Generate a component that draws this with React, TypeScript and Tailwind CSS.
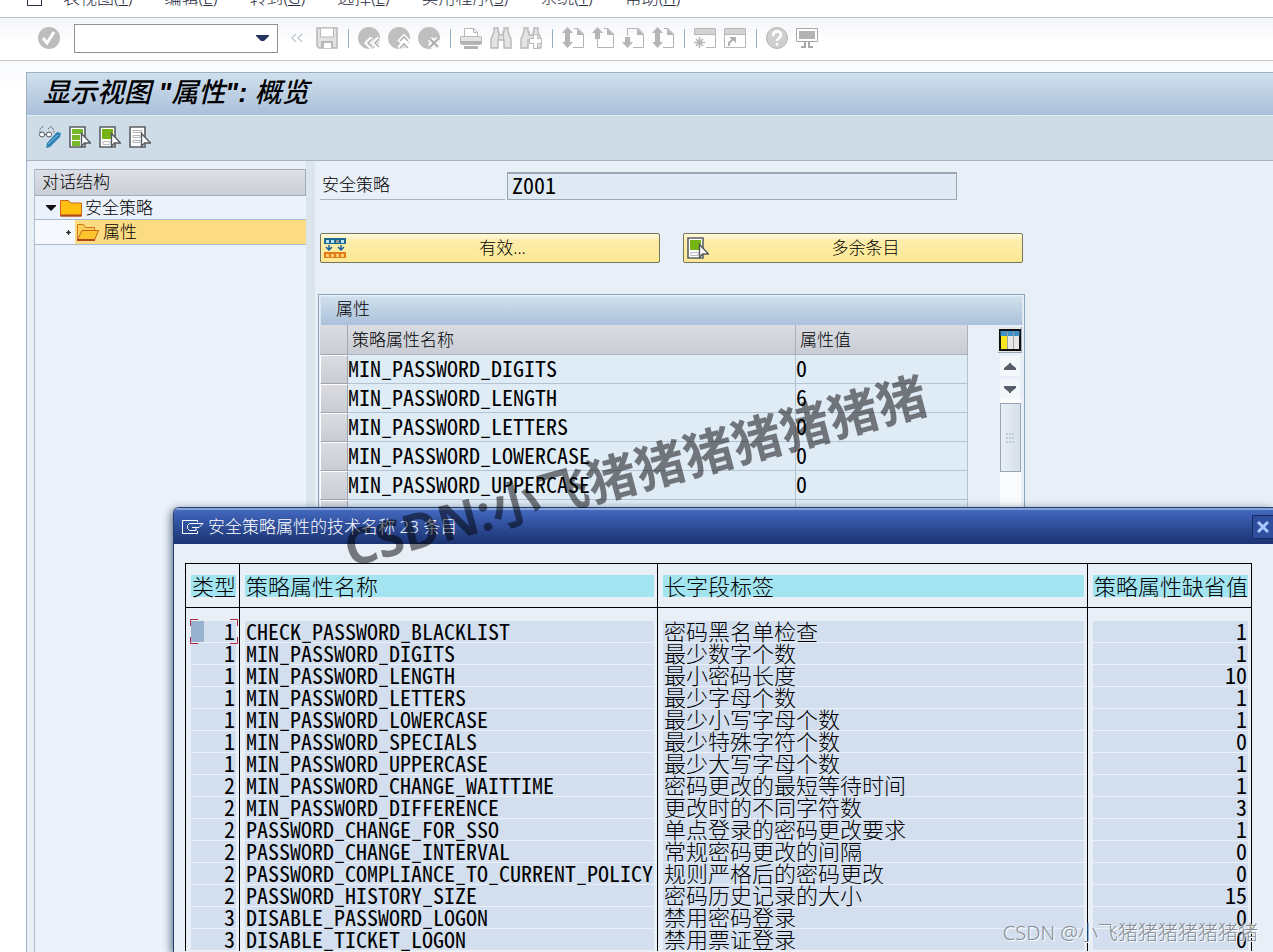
import type { ReactNode } from "react";

type IconProps = { children: ReactNode; label?: string };

const Glyph = ({ children }: IconProps) => (
  <svg width="22" height="22" viewBox="0 0 22 22" fill="none" aria-hidden="true">
    {children}
  </svg>
);

const ToolButton = ({ children, label }: IconProps) => (
  <button
    type="button"
    aria-label={label}
    className="flex h-7 w-[30px] shrink-0 items-center justify-center"
  >
    <Glyph>{children}</Glyph>
  </button>
);

const Separator = () => (
  <span className="flex w-3 shrink-0 justify-center">
    <span className="h-[19px] w-px bg-[#8fb0c6]" />
  </span>
);

const menus = [
  { text: "表视图", hotkey: "T" },
  { text: "编辑", hotkey: "E" },
  { text: "转到", hotkey: "G" },
  { text: "选择", hotkey: "L" },
  { text: "实用程序", hotkey: "S" },
  { text: "系统", hotkey: "Y" },
  { text: "帮助", hotkey: "H" },
];

const attributes = [
  { name: "MIN_PASSWORD_DIGITS", value: "0" },
  { name: "MIN_PASSWORD_LENGTH", value: "6" },
  { name: "MIN_PASSWORD_LETTERS", value: "0" },
  { name: "MIN_PASSWORD_LOWERCASE", value: "0" },
  { name: "MIN_PASSWORD_UPPERCASE", value: "0" },
  { name: "", value: "" },
];

const entries = [
  { type: 1, name: "CHECK_PASSWORD_BLACKLIST", label: "密码黑名单检查", value: 1 },
  { type: 1, name: "MIN_PASSWORD_DIGITS", label: "最少数字个数", value: 1 },
  { type: 1, name: "MIN_PASSWORD_LENGTH", label: "最小密码长度", value: 10 },
  { type: 1, name: "MIN_PASSWORD_LETTERS", label: "最少字母个数", value: 1 },
  { type: 1, name: "MIN_PASSWORD_LOWERCASE", label: "最少小写字母个数", value: 1 },
  { type: 1, name: "MIN_PASSWORD_SPECIALS", label: "最少特殊字符个数", value: 0 },
  { type: 1, name: "MIN_PASSWORD_UPPERCASE", label: "最少大写字母个数", value: 1 },
  { type: 2, name: "MIN_PASSWORD_CHANGE_WAITTIME", label: "密码更改的最短等待时间", value: 1 },
  { type: 2, name: "MIN_PASSWORD_DIFFERENCE", label: "更改时的不同字符数", value: 3 },
  { type: 2, name: "PASSWORD_CHANGE_FOR_SSO", label: "单点登录的密码更改要求", value: 1 },
  { type: 2, name: "PASSWORD_CHANGE_INTERVAL", label: "常规密码更改的间隔", value: 0 },
  { type: 2, name: "PASSWORD_COMPLIANCE_TO_CURRENT_POLICY", label: "规则严格后的密码更改", value: 0 },
  { type: 2, name: "PASSWORD_HISTORY_SIZE", label: "密码历史记录的大小", value: 15 },
  { type: 3, name: "DISABLE_PASSWORD_LOGON", label: "禁用密码登录", value: 0 },
  { type: 3, name: "DISABLE_TICKET_LOGON", label: "禁用票证登录", value: 0 },
];

const MenuBar = () => (
  <nav className="h-[18px] overflow-hidden border-b border-[#bcc4cc] bg-white">
    <div className="-mt-[14px] flex h-6 items-center gap-8 pl-[27px] leading-6 text-[#1f2a3c]">
      <span className="-mr-[11px] h-4 w-[15px] border border-[#2b3340]" />
      {menus.map((menu) => (
        <button key={menu.text} type="button" className="whitespace-nowrap">
          {menu.text}(<u>{menu.hotkey}</u>)
        </button>
      ))}
    </div>
  </nav>
);

const arrowUp = "M5.500 0 11 6H8v6H3V6H0z";
const arrowDown = "M5.500 21 11 15H8v-5H3v5H0z";

const PageIcon = ({ up, down }: { up?: boolean; down?: boolean }) => (
  <>
    <path d={up ? "M12 1.500h4l5.500 5.500v13.500" : "M5.500 9V1.500h11l5 5.500v13.500"} stroke="#b5b5b5" />
    <path d={down ? "M21.500 20.500H11" : "M21.500 20.500h-16V12"} stroke="#b5b5b5" />
    <path d="M15 1v7h7z" fill="#b5b5b5" />
    {up && <path d={arrowUp} fill="#b5b5b5" />}
    {down && <path d={arrowDown} fill="#b5b5b5" />}
  </>
);

const binoculars = "M4 1h4v4h1v3h4V5h1V1h4v4l3 7v9h-7v-8H8v8H1v-9l3-7z";

const StandardToolbar = () => (
  <header className="flex h-[43px] items-center overflow-hidden border-b border-[#c3c7cc] bg-linear-to-b from-[#f3f5f9] to-white to-60% pb-[2px] pl-[34px]">
    <ToolButton label="回车">
      <circle cx="11" cy="11" r="11" fill="#bdbdbd" />
      <path d="m5 11 4 5 7-11" stroke="#fff" strokeWidth="3" />
    </ToolButton>
    <div className="mr-1 ml-[10px] flex h-[29px] w-[204px] shrink-0 border border-[#8f9499] bg-white">
      <input aria-label="命令" className="w-0 flex-1 px-1 outline-none" />
      <button
        type="button"
        aria-label="历史"
        className="flex w-[30px] items-center justify-center"
      >
        <svg width="13" height="6" viewBox="0 0 13 6" aria-hidden="true">
          <path d="M0 0h13v1L8 6H5L0 1z" fill="#26345f" />
        </svg>
      </button>
    </div>
    <ToolButton label="隐藏">
      <path d="m10 7-4 4 4 4m6-8-4 4 4 4" stroke="#c8ccd2" strokeWidth="1.500" />
    </ToolButton>
    <ToolButton label="保存">
      <path d="M1 1h20v20H3l-2-2z" fill="#e2e2e2" stroke="#b8b8b8" strokeWidth="1.500" />
      <path d="M4.500 1h13v9h-13z" fill="#fff" stroke="#b8b8b8" />
      <path d="M5 14h12v7H5z" fill="#b8b8b8" />
      <path d="M8 16h7v5H8z" fill="#fff" />
    </ToolButton>
    <Separator />
    <ToolButton label="返回">
      <circle cx="11" cy="11" r="11" fill="#bfbfbf" />
      <path d="m14 11-5 5 5 5m7-10-5 5 5 5" stroke="#fff" strokeWidth="4.500" />
      <path d="m14 12-4 4 4 4m7-8-4 4 4 4" stroke="#b0b0b0" strokeWidth="1.600" />
    </ToolButton>
    <ToolButton label="退出">
      <circle cx="11" cy="11" r="11" fill="#bfbfbf" />
      <path d="m11 15 5-5 5 5m-10 6 5-5 5 5" stroke="#fff" strokeWidth="4.500" />
      <path d="m12 14 4-4 4 4m-8 7 4-4 4 4" stroke="#b0b0b0" strokeWidth="1.600" />
    </ToolButton>
    <ToolButton label="取消">
      <circle cx="11" cy="11" r="11" fill="#bfbfbf" />
      <path d="m12 12 8 8m0-8-8 8" stroke="#fff" strokeWidth="6" />
      <path d="m12 12 8 8m0-8-8 8" stroke="#b0b0b0" strokeWidth="2.400" />
    </ToolButton>
    <Separator />
    <ToolButton label="打印">
      <path d="M4.500 9V1.500h9l4 4V9M13.500 1.500v4h4" stroke="#b8b8b8" fill="#fff" />
      <rect x=".5" y="9.500" width="21" height="8" rx="1" fill="#e4e4e4" stroke="#b8b8b8" />
      <path d="M1 14h20v3H1zM4 19h14v3H4z" fill="#b3b3b3" />
    </ToolButton>
    <ToolButton label="查找">
      <path d={binoculars} fill="#e4e4e4" stroke="#b8b8b8" strokeWidth="1.400" />
      <path d="M8.500 6v7m5-7v7" stroke="#b8b8b8" />
    </ToolButton>
    <ToolButton label="查找下一个">
      <path d={binoculars} fill="#e4e4e4" stroke="#b8b8b8" strokeWidth="1.400" />
      <path d="M13.500 7.500h4v4h4v5h-4v5h-4v-5h-4v-5h4z" fill="#fff" stroke="#b8b8b8" />
    </ToolButton>
    <Separator />
    <ToolButton label="第一页">
      <PageIcon up down />
    </ToolButton>
    <ToolButton label="上一页">
      <PageIcon up />
    </ToolButton>
    <ToolButton label="下一页">
      <PageIcon down />
    </ToolButton>
    <ToolButton label="最后一页">
      <PageIcon up down />
    </ToolButton>
    <Separator />
    <ToolButton label="新建会话">
      <path d="M.5 8V1.500h21v19H12" stroke="#b8b8b8" fill="none" />
      <path d="M1 2h20v5H1z" fill="#d3d3d3" />
      <path d="M1 7.500h20" stroke="#b8b8b8" />
      <path d="M5.500 10v11M0 15.500h11M2 12l7 7m0-7-7 7" stroke="#b5b5b5" strokeWidth="1.500" />
    </ToolButton>
    <ToolButton label="生成快捷方式">
      <path d="M.5 1.500h21v19H.5z" stroke="#b8b8b8" fill="#fff" />
      <path d="M1 2h20v5H1z" fill="#d3d3d3" />
      <path d="M1 7.500h20" stroke="#b8b8b8" />
      <path d="M5 19v-3l4-4" stroke="#b0b0b0" strokeWidth="2" />
      <path d="M5 10h7v6z" fill="#b0b0b0" />
    </ToolButton>
    <Separator />
    <ToolButton label="帮助">
      <circle cx="11" cy="11" r="10.500" fill="#cfcfcf" stroke="#b5b5b5" />
      <path d="M7 9c0-6 8-6 8-1 0 3-4 3-4 6" stroke="#fff" strokeWidth="2.600" />
      <path d="M9.700 16h2.600v2.600H9.700z" fill="#fff" />
    </ToolButton>
    <ToolButton label="定制布局">
      <path d="M.5 1.500h21v13H.5z" stroke="#a8a8a8" fill="#fff" />
      <path d="M3 4h16v8H3z" fill="#b3b3b3" />
      <path d="M8 15h2v4H8zm4 0h2v4h-2zm-7 4h5v2H5zm7 0h5v2h-5z" fill="#a8a8a8" />
    </ToolButton>
  </header>
);

const SheetIcon = ({ variant }: { variant: "all" | "block" | "none" }) => (
  <>
    <path d="M1 1h15v20H1z" fill="#fff" stroke="#5b5f63" strokeWidth="1.600" />
    {variant === "all" && <path d="M3 3h11v5H3zm0 6h8v5H3zm0 6h8v5H3z" fill="#76b82a" />}
    {variant === "all" && <path d="M3 8.500h10M3 14.500h8" stroke="#fff" />}
    {variant === "block" && (
      <>
        <path d="M3 3h11v10H3z" fill="#76b315" />
        <path d="M4 15.500h7v3H4z" stroke="#b9bdc0" />
      </>
    )}
    {variant === "none" && (
      <path d="M4 4.500h9v2H4zm0 5h7v2H4zm0 5h7v2H4z" stroke="#b4b8bb" />
    )}
    <path d="M12.500 7.500v13l3-3.500h6z" fill="#fff" stroke="#55595d" strokeWidth="1.400" />
  </>
);

const DialogStructure = () => (
  <aside className="w-[272px] shrink-0 border-l border-[#b2bfce] bg-[#ebf2fb]">
    <h2 className="h-[27px] border border-l-0 border-[#a4abb6] bg-linear-to-b from-[#dde0e6] to-[#cbced6] pl-[7px] leading-6">
      对话结构
    </h2>
    <button
      type="button"
      className="flex h-6 w-full items-center border-b border-[#a9b8cf] pl-[11px]"
    >
      <svg width="10" height="6" viewBox="0 0 10 6" aria-hidden="true">
        <path d="M0 0h10v1L5 6 0 1z" fill="#111" />
      </svg>
      <svg className="mr-[3px] ml-1" width="22" height="18" viewBox="0 0 22 18" aria-hidden="true">
        <path d="M.5 1.500h8l2 2.500h11v13H.5z" fill="#fdc010" stroke="#c9661a" />
        <path d="M.5 16.500h21" stroke="#b2461c" strokeWidth="2" />
      </svg>
      安全策略
    </button>
    <button
      type="button"
      className="flex h-[25px] w-full border-b border-[#a9b8cf] bg-[#fbdc82]"
    >
      <span className="flex h-full w-10 items-center justify-end bg-[#f5f9fe] pr-1">
        <svg width="5" height="5" viewBox="0 0 5 5" aria-hidden="true">
          <path d="M1 1h3v3H1z" fill="#777" />
          <path d="M2.500 0v5M0 2.500h5" stroke="#333" />
        </svg>
      </span>
      <span className="flex h-full items-center">
        <svg className="mr-1 ml-[2px]" width="22" height="18" viewBox="0 0 22 18" aria-hidden="true">
          <path d="M.5 16V1.500h6l2 3h9V8" fill="#fbd05b" stroke="#d2741c" />
          <path d="M.5 17 5 7.500h16.500L17.500 17z" fill="#fcc52c" stroke="#c7641a" />
          <path d="M0 17h18" stroke="#b2461c" strokeWidth="2" />
        </svg>
        属性
      </span>
    </button>
  </aside>
);

const ActionButton = ({ icon, children }: { icon: ReactNode; children: ReactNode }) => (
  <button
    type="button"
    className="flex h-[30px] w-[340px] items-center rounded-xs border border-[#77745c] bg-linear-to-b from-[#fffbe0] via-[#fdedaa] via-25% to-[#fce893] pl-[3px]"
  >
    {icon}
    <span className="flex-1">{children}</span>
  </button>
);

const AttributeTable = () => (
  <section className="w-[707px] border border-[#8da2bd] p-px">
    <h2 className="h-[29px] border border-b-0 border-[#d9e6f1] bg-linear-to-b from-[#cfdfeb] to-[#abc1dc] pl-[15px] leading-6">
      属性
    </h2>
    <div className="flex justify-between pr-px">
      <table className="w-[648px] table-fixed border-separate border-spacing-0 text-left">
        <thead>
          <tr className="h-[30px] bg-linear-to-b from-[#d9dce1] to-[#c9ccd4]">
            <th className="w-7 border-r border-b border-[#9fa6b2]" aria-label="选择" />
            <th className="w-[448px] border-r border-b border-[#abb2be] pl-1 font-light">
              策略属性名称
            </th>
            <th className="border-r border-b border-[#abb2be] pl-1 font-light">属性值</th>
          </tr>
        </thead>
        <tbody className="font-['Noto_Sans_Mono_CJK_SC','Liberation_Mono',monospace] text-[22px] leading-6 font-normal">
          {attributes.map((row, i) => (
            <tr key={i} className="h-[29px] bg-[#dfebf5] align-top">
              <td className="border border-t-white border-r-[#9fa6b2] border-b-[#9fa6b2] border-l-white bg-linear-to-b from-[#dadce1] to-[#c9ccd4] p-0" />
              <td className="border-r border-b border-[#b3c3d2] p-0">{row.name}</td>
              <td className="border-r border-b border-[#b3c3d2] p-0">{row.value}</td>
            </tr>
          ))}
        </tbody>
      </table>
      <div className="flex w-6 flex-col items-center">
        <button
          type="button"
          aria-label="配置"
          className="mt-[2px] flex h-[26px] w-6 items-center justify-center border-r border-b border-[#9ba7b5] bg-[#e3e6ea]"
        >
          <Glyph>
            <path d="M0 0h22v22H0z" fill="#111" />
            <path d="M1.500 2h19v5h-19z" fill="#3f8fc9" />
            <path d="M2 7h6v13H2z" fill="#fbe51e" />
            <path d="M9 7h5v13H9zm6 0h5v13h-5z" fill="#e6e6e6" />
            <path d="M8.500 3v17m6-17v17" stroke="#a0a0a0" />
          </Glyph>
        </button>
        <button
          type="button"
          aria-label="向上"
          className="mt-[3px] flex h-5 w-5 items-center justify-center bg-[#f4f7fa]"
        >
          <svg width="12" height="7" viewBox="0 0 12 7" aria-hidden="true">
            <path d="M7 0H5v1L0 5v2h12V5L7 1z" fill="#555e69" />
          </svg>
        </button>
        <button
          type="button"
          aria-label="向下"
          className="mt-[3px] flex h-5 w-5 items-center justify-center bg-[#f4f7fa]"
        >
          <svg width="12" height="7" viewBox="0 0 12 7" aria-hidden="true">
            <path d="M7 7H5V6L0 2V0h12v2L7 6z" fill="#555e69" />
          </svg>
        </button>
        <div className="w-[21px] flex-1 bg-[#fafbfc] pt-1">
          <div className="grid h-[69px] place-items-center border border-[#98a5b5] bg-linear-to-r from-[#e9eff6] to-[#d5dfea]">
            <svg width="8" height="10" viewBox="0 0 8 10" aria-hidden="true">
              <path
                d="M1 0v2m3-2v2m3-2v2M1 4v2m3-2v2m3-2v2M1 8v2m3-2v2m3-2v2"
                stroke="#a7b3c2"
              />
            </svg>
          </div>
        </div>
      </div>
    </div>
  </section>
);

const MainWindow = () => (
  <main className="flex flex-1 flex-col pt-[11px] pl-[26px]">
    <div className="flex flex-1 flex-col border-t border-l border-[#9fb0c4]">
      <h1 className="h-[43px] border-b border-[#dfeaf3] bg-linear-to-b from-[#cfdfec] to-[#abc0da] pl-4 font-['Liberation_Sans','Noto_Sans_CJK_SC',sans-serif] text-[27px] leading-10 font-medium whitespace-nowrap italic">
        显示视图 <b>"</b>属性<b>":</b> 概览
      </h1>
      <div className="flex h-[45px] items-center border-b border-[#a6b3c1] bg-[#cedce7] pb-[3px] pl-2">
        <ToolButton label="显示 -> 更改">
          <path d="M1 7V3l2-2h2m4 2 2-2h2l2 4v3" stroke="#666c72" strokeDasharray="2 1" />
          <circle cx="3" cy="8.500" r="2.500" stroke="#4b5157" fill="#fff" />
          <circle cx="10" cy="8.500" r="2.500" stroke="#4b5157" fill="#fff" />
          <path d="M5.500 8.500h2" stroke="#4b5157" />
          <path d="m7 22 1-5L18 6l4 1-1 4-10 10z" fill="#2d82b5" />
          <path d="m9 18 10-9" stroke="#8fc3e4" />
        </ToolButton>
        <ToolButton label="全选">
          <SheetIcon variant="all" />
        </ToolButton>
        <ToolButton label="选择块">
          <SheetIcon variant="block" />
        </ToolButton>
        <ToolButton label="取消全选">
          <SheetIcon variant="none" />
        </ToolButton>
      </div>
      <div className="flex flex-1 bg-[#e8eff7]">
        <div className="flex pt-2 pl-[7px]">
          <DialogStructure />
        </div>
        <div className="w-[9px] shrink-0 bg-[#dae6ec]" />
        <div className="flex-1 pt-[11px] pl-[3px]">
          <div className="flex h-7 gap-[2px] pl-[2px]">
            <label
              htmlFor="policy"
              className="w-[185px] border-b border-[#a9b4c0] pl-[2px] leading-[26px]"
            >
              安全策略
            </label>
            <input
              id="policy"
              readOnly
              defaultValue="Z001"
              className="w-[450px] border border-t-2 border-[#9ba7b4] bg-[#dfeaf4] px-1 pb-1 font-['Noto_Sans_Mono_CJK_SC','Liberation_Mono',monospace] text-[22px] font-normal outline-none"
            />
          </div>
          <div className="mt-[33px] mb-[31px] flex gap-[23px] pl-[2px]">
            <ActionButton
              icon={
                <Glyph>
                  <path d="M0 1h22v6H0z" fill="#1d6a92" />
                  <path d="M2 3h3v3H2zm5 0h3v3H7zm10 0h3v3h-3z" fill="#bfe0f2" />
                  <path d="M12 3h3v3h-3z" fill="#999" />
                  <path
                    d="M5 8v5m-3-3 3 3 3-3M17 8v5m-3-3 3 3 3-3"
                    stroke="#1f5f9d"
                    strokeWidth="1.500"
                  />
                  <path d="M0 15h22v6H0z" fill="#e37b16" />
                  <path d="M2 17h3v3H2zm5 0h3v3H7zm5 0h3v3h-3zm5 0h3v3h-3z" fill="#ffcf70" />
                </Glyph>
              }
            >
              有效...
            </ActionButton>
            <ActionButton
              icon={
                <Glyph>
                  <SheetIcon variant="block" />
                </Glyph>
              }
            >
              多余条目
            </ActionButton>
          </div>
          <AttributeTable />
        </div>
      </div>
    </div>
  </main>
);

const headBand =
  "block h-[22px] bg-[#a3e4f1] px-px leading-[20px] whitespace-nowrap";
const rowBand =
  "block h-[22px] border-b border-[#ebf0f8] bg-[#d3dfee] px-px leading-[18px] whitespace-nowrap";
const headCell = "border-r border-b border-black py-0 pl-[5px] pr-[3px] font-light";
const bodyCell = "border-r border-black py-0 pl-[5px] pr-[3px]";

const TechnicalNamesDialog = () => (
  <section
    role="dialog"
    aria-labelledby="dialog-title"
    className="absolute top-[507px] right-0 bottom-0 left-[173px] overflow-hidden rounded-tl-md border-t border-l border-[#24406f] bg-[#e9eff6] shadow-[-2px_2px_8px_rgba(40,60,90,0.7)]"
  >
    <div className="flex h-9 items-center border-t-2 border-[#86a3d8] bg-linear-to-b from-[#4368bf] to-[#1a3271] pl-2 text-white">
      <svg width="22" height="16" viewBox="0 0 22 16" fill="none" aria-hidden="true">
        <path d="M15.500 3V1.500h-15v13h15V12" stroke="#fff" />
        <path d="M7.500 4.500h13.500l-4 4h-3M7.500 4.500l-2 2v3l2 2H14v-3H10" stroke="#fff" />
      </svg>
      <h2 id="dialog-title" className="flex-1 pl-1">
        安全策略属性的技术名称 23 条目
      </h2>
      <button
        type="button"
        aria-label="关闭"
        className="flex h-6 w-[21px] items-center justify-center rounded-l-xs border border-r-0 border-[#14295f] bg-[#2f4f9e]"
      >
        <svg width="12" height="12" viewBox="0 0 12 12" aria-hidden="true">
          <path d="m1 1 10 10m0-10L1 11" stroke="#a9c6ff" strokeWidth="3" />
        </svg>
      </button>
    </div>
    <div className="pt-[19px] pr-[21px] pl-[11px]">
      <table className="w-full table-fixed border-separate border-spacing-0 border-t border-l border-black text-left font-['Noto_Sans_Mono_CJK_SC','Liberation_Mono','Noto_Sans_CJK_SC',monospace] text-[22px] font-normal">
        <thead className="font-['Noto_Sans_CJK_SC',sans-serif]">
          <tr className="h-11">
            <th className={`${headCell} w-[54px]`}>
              <span className={headBand}>类型</span>
            </th>
            <th className={`${headCell} w-[418px]`}>
              <span className={headBand}>策略属性名称</span>
            </th>
            <th className={headCell}>
              <span className={headBand}>长字段标签</span>
            </th>
            <th className={`${headCell} w-[164px]`}>
              <span className={headBand}>策略属性缺省值</span>
            </th>
          </tr>
        </thead>
        <tbody>
          <tr className="h-[13px]" aria-hidden="true">
            <td className={bodyCell} />
            <td className={bodyCell} />
            <td className={bodyCell} />
            <td className={bodyCell} />
          </tr>
          {entries.map((entry, i) => (
            <tr key={entry.name}>
              <td className={`${bodyCell} text-right`}>
                {i === 0 ? (
                  <span className={`${rowBand} relative`}>
                    {entry.type}
                    <span className="absolute top-0 left-0 h-[21px] w-[13px] bg-[#98b1cf]" />
                    <svg
                      className="absolute -top-[2px] -left-px"
                      width="48"
                      height="25"
                      viewBox="0 0 48 25"
                      fill="none"
                      aria-hidden="true"
                    >
                      <path
                        d="M8 .5H.5V7M40 .5h7.500V7M8 24.500H.5V18M40 24.500h7.500V18"
                        stroke="#b5243c"
                      />
                    </svg>
                  </span>
                ) : (
                  <span className={rowBand}>{entry.type}</span>
                )}
              </td>
              <td className={bodyCell}>
                <span className={rowBand}>{entry.name}</span>
              </td>
              <td className={bodyCell}>
                <span className={`${rowBand} font-['Noto_Sans_CJK_SC',sans-serif] font-light`}>
                  {entry.label}
                </span>
              </td>
              <td className={`${bodyCell} text-right`}>
                <span className={rowBand}>{entry.value}</span>
              </td>
            </tr>
          ))}
        </tbody>
      </table>
    </div>
  </section>
);

const App = () => (
  <div className="relative flex min-h-screen flex-col overflow-hidden bg-linear-to-b from-[#eef3f9] to-white to-10% font-['Noto_Sans','Noto_Sans_CJK_SC',sans-serif] text-[17px] font-light text-black">
    <MenuBar />
    <StandardToolbar />
    <MainWindow />
    <TechnicalNamesDialog />
    <p className="pointer-events-none absolute top-[519px] left-[345px] origin-left -rotate-[15deg] text-[50px] leading-[60px] font-bold whitespace-nowrap text-black/50">
      CSDN:小飞猪猪猪猪猪猪猪
    </p>
    <p className="pointer-events-none absolute right-[15px] bottom-[5px] text-[20px] leading-7 font-light whitespace-nowrap text-[#858c95] [text-shadow:1px_1px_0_#fff]">
      CSDN @小飞猪猪猪猪猪猪猪
    </p>
  </div>
);

export default App;
